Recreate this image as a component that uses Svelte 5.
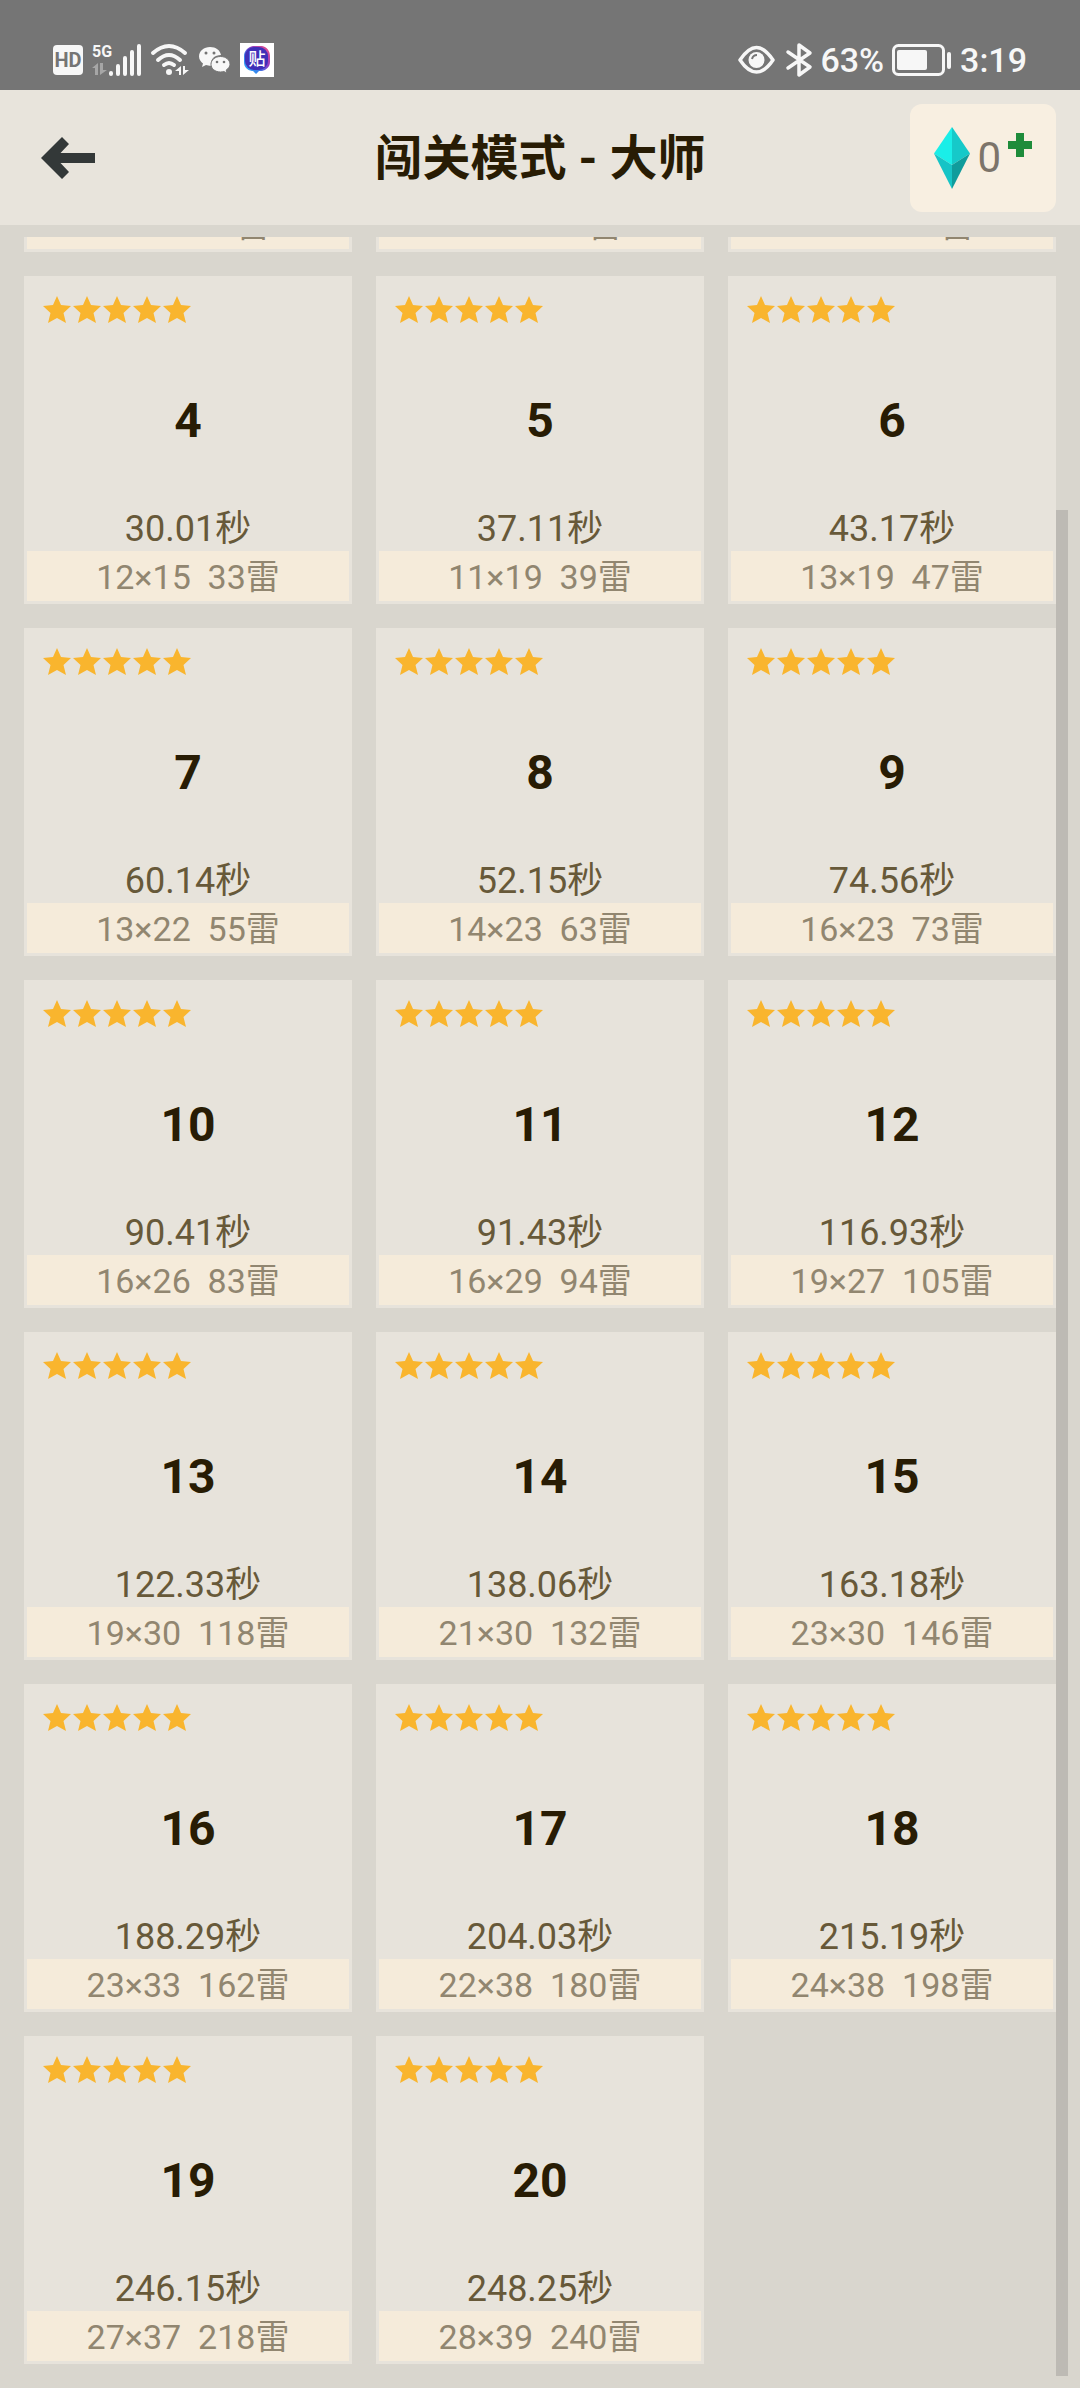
<script>
  import { onMount } from 'svelte';

  const levels = [
    { id: 1, size: '8×12', mines: 15 },
    { id: 2, size: '7×15', mines: 18 },
    { id: 3, size: '7×18', mines: 26 },
    { id: 4, time: '30.01', size: '12×15', mines: 33 },
    { id: 5, time: '37.11', size: '11×19', mines: 39 },
    { id: 6, time: '43.17', size: '13×19', mines: 47 },
    { id: 7, time: '60.14', size: '13×22', mines: 55 },
    { id: 8, time: '52.15', size: '14×23', mines: 63 },
    { id: 9, time: '74.56', size: '16×23', mines: 73 },
    { id: 10, time: '90.41', size: '16×26', mines: 83 },
    { id: 11, time: '91.43', size: '16×29', mines: 94 },
    { id: 12, time: '116.93', size: '19×27', mines: 105 },
    { id: 13, time: '122.33', size: '19×30', mines: 118 },
    { id: 14, time: '138.06', size: '21×30', mines: 132 },
    { id: 15, time: '163.18', size: '23×30', mines: 146 },
    { id: 16, time: '188.29', size: '23×33', mines: 162 },
    { id: 17, time: '204.03', size: '22×38', mines: 180 },
    { id: 18, time: '215.19', size: '24×38', mines: 198 },
    { id: 19, time: '246.15', size: '27×37', mines: 218 },
    { id: 20, time: '248.25', size: '28×39', mines: 240 }
  ];

  let list;
  let thumbTop = $state(0);
  let thumbHeight = $state(100);

  function syncThumb() {
    thumbTop = (list.scrollTop / list.scrollHeight) * 100;
    thumbHeight = (list.clientHeight / list.scrollHeight) * 100;
  }

  onMount(() => {
    list.scrollTop = list.scrollHeight;
    syncThumb();
  });
</script>

<svelte:window onresize={syncThumb} />

<div class="app">
  <div class="status">
    <div class="group">
      <svg width="30" height="30" viewBox="0 0 30 30" aria-hidden="true">
        <rect width="30" height="30" rx="4" fill="#f7f7f7" />
        <text x="15" y="22" text-anchor="middle" font-size="20" font-weight="700" fill="#757575">HD</text>
      </svg>
      <svg width="50" height="32" viewBox="0 0 50 32" aria-hidden="true">
        <text x="0" y="13" font-size="16" font-weight="700" fill="#f7f7f7">5G</text>
        <path d="M6 19v12H3v-7H0zM8 31V19h3v7h4z" fill="#a6a6a6" />
        <path d="M19 29v1M26 22v8M33 14v16M40 8v22M47 2v28" stroke="#f7f7f7" stroke-width="4" stroke-linecap="round" />
      </svg>
      <svg width="39" height="34" viewBox="0 0 39 34" aria-hidden="true">
        <g fill="none" stroke="#f7f7f7" stroke-width="4" stroke-linecap="round">
          <path d="M2 10Q18 -4 34 10" />
          <path d="M7 17Q18 7 29 17" />
          <path d="M13 22Q18 18 23 22" />
        </g>
        <circle cx="18" cy="29" r="3" fill="#f7f7f7" />
        <path d="M30 23v9h-2v-4h-4zM32 32v-9h2v4h4z" fill="#f7f7f7" />
      </svg>
      <svg width="32" height="28" viewBox="0 0 32 28" aria-hidden="true">
        <path d="M11 1C5 1 0 5 0 10.500c0 3 2 5.500 4 7L3 21l4-2c1.500.5 3 .7 5 .7C11 13 16 9 22 9 21 4 17 1 11 1z" fill="#f7f7f7" />
        <path d="M21.500 10.500c-5.500 0-9.500 3.500-9.500 7.800s4 7.700 9.500 7.700c1.200 0 2.300-.2 3.300-.5L28 27l-.8-3c2.300-1.500 3.800-3.500 3.800-5.700 0-4.300-4-7.800-9.500-7.800z" fill="#f7f7f7" stroke="#757575" />
        <g fill="#757575">
          <circle cx="7" cy="7" r="1.500" /><circle cx="15" cy="7" r="1.500" />
          <circle cx="18" cy="16" r="1.300" /><circle cx="25" cy="16" r="1.300" />
        </g>
      </svg>
      <svg width="34" height="34" viewBox="0 0 34 34" aria-hidden="true">
        <defs>
          <linearGradient id="bubble" x1="0" y1="1" x2="1" y2="0">
            <stop offset="0" stop-color="#27b4ff" />
            <stop offset=".35" stop-color="#3a7be8" />
            <stop offset=".6" stop-color="#8a3fc8" />
            <stop offset="1" stop-color="#f7507c" />
          </linearGradient>
        </defs>
        <rect width="34" height="34" fill="#fff" />
        <path d="M13 3h9c5 1 8 5 8 10v6c0 5-4 8-8 9h-3l-3 3-3-3h-1c-5-1-8-4-8-9v-6c0-5 4-9 9-10z" fill="url(#bubble)" />
        <rect x="5" y="4" width="23" height="23" rx="9" fill="#4030b8" />
        <text x="17" y="22" text-anchor="middle" font-size="17" font-weight="500" fill="#fff">贴</text>
      </svg>
    </div>
    <div class="group right">
      <svg class="eye" width="37" height="30" viewBox="0 0 37 30" aria-hidden="true">
        <path d="M2 15C8 6 13 2.500 18.500 2.500S29 6 35 15C29 24 24 27 18.500 27S8 24 2 15z" fill="none" stroke="#f7f7f7" stroke-width="3.500" stroke-linejoin="round" />
        <circle cx="18.500" cy="15" r="8" fill="#f7f7f7" />
        <path d="M14 14q1-4 5-4" fill="none" stroke="#757575" stroke-width="2" />
      </svg>
      <svg width="26" height="34" viewBox="0 0 26 34" aria-hidden="true">
        <path d="M2 9l22 15-11 8V2l11 8L2 25" fill="none" stroke="#f7f7f7" stroke-width="3.500" stroke-linejoin="round" stroke-linecap="round" />
      </svg>
      <span>63%</span>
      <svg width="60" height="32" viewBox="0 0 60 32" aria-hidden="true">
        <rect x="1.500" y="1.500" width="50" height="29" rx="5" fill="none" stroke="#f7f7f7" stroke-width="3" />
        <rect x="5" y="6" width="30" height="20" rx="2" fill="#f7f7f7" />
        <rect x="55" y="8" width="4" height="17" rx="2" fill="#f7f7f7" />
      </svg>
      <time>3:19</time>
    </div>
  </div>

  <header>
    <button class="back" aria-label="返回">
      <svg width="54" height="42" viewBox="0 0 54 42" aria-hidden="true">
        <path d="M0 21L21 0l7 7-8.500 9H54v10H19.500l8.500 9-7 7z" fill="#333838" />
      </svg>
    </button>
    <h1>闯关模式 - 大师</h1>
    <button class="gems" aria-label="宝石 0">
      <svg width="36" height="62" viewBox="0 0 36 62" aria-hidden="true">
        <path d="M18 0L0 26.500 18 38z" fill="#1aeee8" />
        <path d="M18 0l18 26.500L18 38z" fill="#16c9c9" />
        <path d="M0 26.500L18 38v24z" fill="#16c4c6" />
        <path d="M36 26.500L18 38v24z" fill="#109c9c" />
      </svg>
      <span>0</span>
      <svg class="plus" width="24" height="24" viewBox="0 0 24 24" aria-hidden="true">
        <path d="M8 0h8v8h8v8h-8v8H8v-8H0V8h8z" fill="#1f8c3b" />
      </svg>
    </button>
  </header>

  <main>
    <div class="list" bind:this={list} onscroll={syncThumb}>
      {#each levels as level (level.id)}
        <button class="card">
          <span class="stars">
            {#each Array(5) as _}
              <svg width="28" height="27" viewBox="0 0 28 27" aria-hidden="true">
                <path d="M14 0l4 9 10 1-7.500 7 2.500 10-9-5-9 5 2.500-10L0 10l10-1z" fill="#f9b52e" />
              </svg>
            {/each}
          </span>
          <strong>{level.id}</strong>
          {#if level.time}
            <span class="time">{level.time}秒</span>
          {/if}
          <span class="board">{level.size}&nbsp; {level.mines}雷</span>
        </button>
      {/each}
    </div>
    <div class="thumb" style="top: {thumbTop}%; height: {thumbHeight}%"></div>
  </main>
</div>

<style>
  :global(body) {
    background: #d9d6ce;
  }

  .app {
    display: flex;
    flex-direction: column;
    height: 100vh;
    box-sizing: border-box;
    padding-bottom: 12px;
    background: #d9d6ce;
    color: #281c04;
    font-family: Roboto, 'Noto Sans CJK SC', sans-serif;
  }

  button {
    margin: 0;
    border: 0;
    color: inherit;
    font: inherit;
    cursor: pointer;
  }

  svg {
    display: block;
    flex: none;
    overflow: visible;
  }

  .status {
    display: flex;
    justify-content: space-between;
    flex: none;
    height: 90px;
    box-sizing: border-box;
    padding: 30px 53px 0;
    background: #757575;
    color: #f7f7f7;
  }

  .group {
    display: flex;
    align-items: center;
    height: 60px;
    gap: 9px;
  }

  .right {
    gap: 8px;
    font-size: 34px;
    font-weight: 500;
    line-height: 60px;
  }

  .eye {
    margin-right: 3px;
  }

  header {
    display: grid;
    grid-template-columns: 1fr auto 1fr;
    align-items: center;
    flex: none;
    height: 135px;
    padding: 0 24px;
    background: #e8e4dc;
  }

  .back {
    justify-self: start;
    padding: 17px;
    background: none;
  }

  h1 {
    margin: 0;
    padding-top: 3px;
    font-size: 48px;
    font-weight: 700;
    line-height: 72px;
  }

  .gems {
    display: flex;
    align-items: center;
    justify-self: end;
    height: 108px;
    padding: 0 24px;
    border-radius: 12px;
    background: #f8efe1;
    color: #7c746a;
    font-size: 42px;
    gap: 7px;
  }

  .plus {
    margin-bottom: 26px;
  }

  main {
    position: relative;
    flex: 1;
    min-height: 0;
    margin-top: 12px;
  }

  .list {
    display: grid;
    grid-template-columns: repeat(3, 1fr);
    gap: 24px;
    height: 100%;
    box-sizing: border-box;
    padding: 0 24px 12px;
    overflow-y: auto;
    scrollbar-width: none;
  }

  .thumb {
    position: absolute;
    right: 12px;
    width: 12px;
    background: #bdbab4;
  }

  .card {
    display: flex;
    flex-direction: column;
    min-height: 328px;
    padding: 20px 3px 3px;
    background: #e7e3db;
  }

  .stars {
    display: flex;
    gap: 2px;
    padding-left: 16px;
  }

  strong {
    flex: 1;
    align-self: center;
    padding-top: 70px;
    font-size: 48px;
    font-weight: 700;
    line-height: 56px;
  }

  .time,
  .board {
    align-self: stretch;
    text-align: center;
  }

  .time {
    color: #675939;
    font-size: 36px;
    line-height: 44px;
  }

  .board {
    height: 50px;
    box-sizing: border-box;
    padding-top: 3px;
    background: #f5ebda;
    color: #918670;
    font-size: 34px;
    line-height: 47px;
  }
</style>
